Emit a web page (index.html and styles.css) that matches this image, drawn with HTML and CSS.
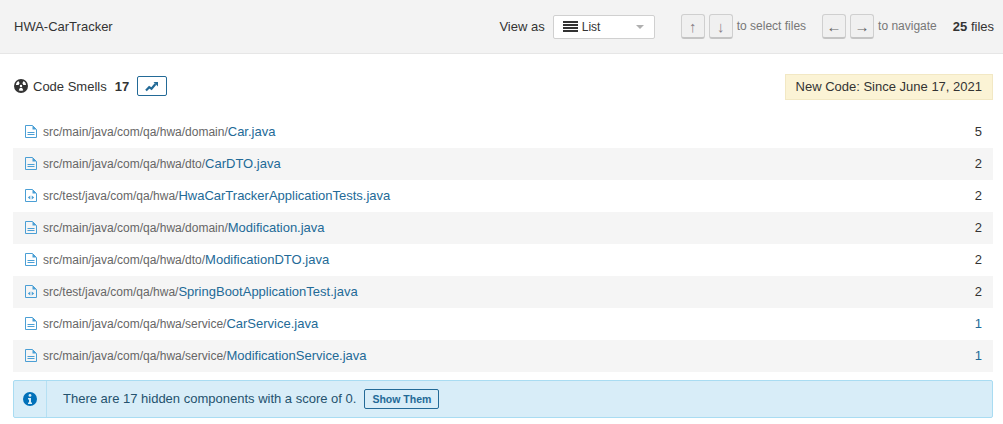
FILE: index.html
```html
<!DOCTYPE html>
<html lang="en">
<head>
  <meta charset="UTF-8" />
  <title>HWA-CarTracker - Code Smells</title>
  <link rel="stylesheet" href="styles.css">
</head>
<body>
  <svg class="icon-defs" width="0" height="0">
    <symbol id="file-text" viewBox="0 0 14 16">
      <path d="M1.500 2.500h7l4 4v8h-11zM3.500 9.500h7M3.500 11.500h7" fill="none" stroke="#4b9fd5"/>
      <path d="M8.500 2.500v4h4z" fill="#4b9fd5"/>
    </symbol>
    <symbol id="file-test" viewBox="0 0 14 16">
      <path d="M1.500 2.500h7l4 4v8h-11z" fill="none" stroke="#4b9fd5"/>
      <path d="M8.500 2.500v4h4z" fill="#4b9fd5"/>
      <path d="M6.300 8.500v4L3.800 10.500zM7.700 8.500v4l2.500-2z" fill="#4b9fd5"/>
    </symbol>
  </svg>

  <header class="topbar">
    <div class="project">HWA-CarTracker</div>
    <div class="view-as">View as</div>
    <div class="view-select">
      <svg class="list-icon" width="15" height="11" viewBox="0 0 15 11"><path d="M0 0h15v2H0zM0 3h15v2H0zM0 6h15v2H0zM0 9h15v2H0z" fill="#333"/></svg>
      <span>List</span>
      <span class="caret"></span>
    </div>
    <div class="key-group select-keys">
      <span class="key key-red">↑</span>
      <span class="key key-red">↓</span>
      <span class="key-note">to select files</span>
    </div>
    <div class="key-group nav-keys">
      <span class="key">←</span>
      <span class="key">→</span>
      <span class="key-note">to navigate</span>
    </div>
    <div class="file-count"><b>25</b> files</div>
  </header>

  <main class="content">
    <div class="summary">
      <svg class="smell-icon" width="14" height="14" viewBox="0 0 14 14">
        <circle cx="7" cy="7" r="7" fill="#333"/>
        <circle cx="7" cy="7" r="1.200" fill="#fff"/>
        <path d="M4.700 11.200a5 5 0 0 0 4.600 0L8 8.800a2.200 2.200 0 0 1-2 0zM1.900 6h2.800a2.400 2.400 0 0 1 1-1.700L4.300 1.900A5 5 0 0 0 1.900 6zM12.100 6H9.300a2.400 2.400 0 0 0-1-1.700l1.400-2.400A5 5 0 0 1 12.100 6z" fill="#fff"/>
      </svg>
      <span class="metric-name">Code Smells</span>
      <b class="metric-value">17</b>
      <span class="history-btn">
        <svg width="14" height="11" viewBox="0 0 14 11"><path d="M1 9.500l3.200-3.300 2.300 1.500L10.500 3" fill="none" stroke="#236a97" stroke-width="2.200"/><path d="M8.500 1H13v4.500z" fill="#236a97"/></svg>
      </span>
      <span class="new-code">New Code: Since June 17, 2021</span>
    </div>

    <div class="rows">
      <div class="row">
        <svg class="file-icon" width="14" height="16"><use href="#file-text"/></svg>
        <span class="path">src/main/java/com/qa/hwa/domain/<a>Car.java</a></span>
        <span class="score">5</span>
      </div>
      <div class="row">
        <svg class="file-icon" width="14" height="16"><use href="#file-text"/></svg>
        <span class="path">src/main/java/com/qa/hwa/dto/<a>CarDTO.java</a></span>
        <span class="score">2</span>
      </div>
      <div class="row">
        <svg class="file-icon" width="14" height="16"><use href="#file-test"/></svg>
        <span class="path">src/test/java/com/qa/hwa/<a>HwaCarTrackerApplicationTests.java</a></span>
        <span class="score">2</span>
      </div>
      <div class="row">
        <svg class="file-icon" width="14" height="16"><use href="#file-text"/></svg>
        <span class="path">src/main/java/com/qa/hwa/domain/<a>Modification.java</a></span>
        <span class="score">2</span>
      </div>
      <div class="row">
        <svg class="file-icon" width="14" height="16"><use href="#file-text"/></svg>
        <span class="path">src/main/java/com/qa/hwa/dto/<a>ModificationDTO.java</a></span>
        <span class="score">2</span>
      </div>
      <div class="row">
        <svg class="file-icon" width="14" height="16"><use href="#file-test"/></svg>
        <span class="path">src/test/java/com/qa/hwa/<a>SpringBootApplicationTest.java</a></span>
        <span class="score">2</span>
      </div>
      <div class="row">
        <svg class="file-icon" width="14" height="16"><use href="#file-text"/></svg>
        <span class="path">src/main/java/com/qa/hwa/service/<a>CarService.java</a></span>
        <span class="score score-link">1</span>
      </div>
      <div class="row">
        <svg class="file-icon" width="14" height="16"><use href="#file-text"/></svg>
        <span class="path">src/main/java/com/qa/hwa/service/<a>ModificationService.java</a></span>
        <span class="score score-link">1</span>
      </div>
    </div>

    <div class="alert">
      <div class="alert-icon">
        <svg width="14" height="14" viewBox="0 0 14 14"><circle cx="7" cy="7" r="7" fill="#0271b9"/><circle cx="7" cy="3.400" r="1.400" fill="#d8edf8"/><path d="M5 6h3v4.500h1V12H5v-1.500h1V7.500H5z" fill="#d8edf8"/></svg>
      </div>
      <div class="alert-text">There are 17 hidden components with a score of 0.</div>
      <span class="show-btn">Show Them</span>
    </div>
  </main>
</body>
</html>
```

FILE: styles.css
```css
body { margin: 0; background: #fff; color: #333; font-family: "Liberation Sans", Arial, sans-serif; font-size: 12px; }
.icon-defs { display: block; height: 0; }

.topbar { display: flex; align-items: center; height: 53px; background: #f3f3f3; border-bottom: 1px solid #e6e6e6; padding: 0 9px 0 14px; }
.project { font-size: 13px; flex: 1; }
.view-as { font-size: 13px; margin-right: 8px; }
.view-select { display: flex; align-items: center; width: 91px; height: 22px; background: #fff; border: 1px solid #d0d0d0; border-radius: 2px; padding-left: 9px; }
.list-icon { margin-right: 4px; }
.caret { margin-left: auto; margin-right: 10px; border-top: 4px solid #b0b0b0; border-left: 4px solid transparent; border-right: 4px solid transparent; margin-top: 1px; }
.key-group { display: flex; align-items: center; }
.select-keys { margin-left: 26px; }
.nav-keys { margin-left: 16px; }
.key { display: flex; align-items: center; justify-content: center; width: 22px; height: 22px; margin-right: 4px; background: #f0f0f0; border: 1px solid #cfcfcf; border-bottom: 2px solid #c4c4c4; border-radius: 3px; color: #666; font-size: 15px; }
.key-red { color: #8a8088; }
.key-note { color: #777; font-size: 12px; margin-top: -2px; }
.file-count { margin-left: 16px; font-size: 13px; }

.content { padding: 0 10px 0 13px; }
.summary { display: flex; align-items: center; height: 62px; padding-top: 2px; box-sizing: border-box; }
.smell-icon { margin: 0 5px 0 1px; }
.metric-name { font-size: 13px; }
.metric-value { margin-left: 8px; font-size: 13px; }
.history-btn { display: flex; align-items: center; justify-content: center; width: 28px; height: 18px; margin-left: 8px; border: 1px solid #236a97; border-radius: 2px; }
.new-code { margin-left: auto; margin-top: 2px; padding: 0 10px; height: 24px; line-height: 23px; background: #fbf3d5; border: 1px solid #f2e8c4; font-size: 13px; }

.row { display: flex; align-items: center; height: 32px; padding: 0 11px 2px; box-sizing: border-box; }
.row:nth-child(even) { background: #f5f5f5; }
.file-icon { margin-right: 5px; }
.path { color: #666; font-size: 12px; }
.path a { color: #236a97; font-size: 13px; }
.score { margin-left: auto; font-size: 13px; }
.score-link { color: #236a97; }

.alert { display: flex; align-items: center; height: 36px; margin-top: 8px; background: #d8edf8; border: 1px solid #a9dcf2; border-radius: 2px; }
.alert-icon { display: flex; align-items: center; justify-content: center; width: 32px; height: 100%; border-right: 1px solid #b6e0f3; }
.alert-text { margin-left: 16px; margin-top: -2px; font-size: 13px; color: #24526e; }
.show-btn { margin-left: 8px; padding: 0 7px; height: 18px; line-height: 18px; border: 1px solid #236a97; border-radius: 2px; color: #236a97; font-size: 10.500px; font-weight: bold; }
```
